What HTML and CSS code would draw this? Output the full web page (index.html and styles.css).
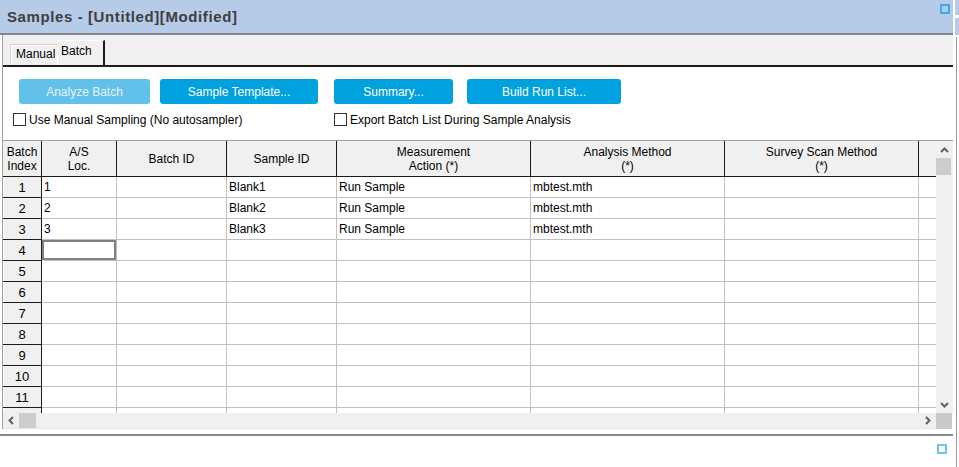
FILE: index.html
```html
<!DOCTYPE html>
<html>
<head>
<meta charset="utf-8">
<link rel="stylesheet" href="styles.css">
</head>
<body>
<div class="window">
  <div class="titlebar">
    <span class="title">Samples - [Untitled][Modified]</span>
    <span class="pin pin-top"></span>
  </div>
  <div class="body">
    <div class="tabstrip">
      <div class="tab tab-manual">Manual</div>
      <div class="tab tab-batch">Batch</div>
    </div>
    <div class="toolbar">
      <div class="btn-group first">
        <button class="btn btn-disabled w-analyze">Analyze Batch</button>
        <button class="btn w-template">Sample Template...</button>
      </div>
      <div class="btn-group second">
        <button class="btn w-summary">Summary...</button>
        <button class="btn w-build">Build Run List...</button>
      </div>
      <label class="check"><span class="box"></span>Use Manual Sampling (No autosampler)</label>
      <label class="check"><span class="box"></span>Export Batch List During Sample Analysis</label>
    </div>
    <div class="grid">
      <div class="sheet-wrap">
        <table class="sheet">
          <colgroup>
            <col class="c-idx"><col class="c-as"><col class="c-id"><col class="c-id"><col class="c-wide"><col class="c-wide"><col class="c-wide"><col class="c-part">
          </colgroup>
          <thead>
            <tr>
              <th class="hidx">Batch<br>Index</th>
              <th>A/S<br>Loc.</th>
              <th>Batch ID</th>
              <th>Sample ID</th>
              <th>Measurement<br>Action (*)</th>
              <th>Analysis Method<br>(*)</th>
              <th>Survey Scan Method<br>(*)</th>
              <th class="hpart"></th>
            </tr>
          </thead>
          <tbody>
            <tr><td class="idx">1</td><td>1</td><td></td><td>Blank1</td><td>Run Sample</td><td>mbtest.mth</td><td></td><td class="part"></td></tr>
            <tr><td class="idx">2</td><td>2</td><td></td><td>Blank2</td><td>Run Sample</td><td>mbtest.mth</td><td></td><td class="part"></td></tr>
            <tr><td class="idx">3</td><td>3</td><td></td><td>Blank3</td><td>Run Sample</td><td>mbtest.mth</td><td></td><td class="part"></td></tr>
            <tr><td class="idx">4</td><td class="focus"></td><td></td><td></td><td></td><td></td><td></td><td class="part"></td></tr>
            <tr><td class="idx">5</td><td></td><td></td><td></td><td></td><td></td><td></td><td class="part"></td></tr>
            <tr><td class="idx">6</td><td></td><td></td><td></td><td></td><td></td><td></td><td class="part"></td></tr>
            <tr><td class="idx">7</td><td></td><td></td><td></td><td></td><td></td><td></td><td class="part"></td></tr>
            <tr><td class="idx">8</td><td></td><td></td><td></td><td></td><td></td><td></td><td class="part"></td></tr>
            <tr><td class="idx">9</td><td></td><td></td><td></td><td></td><td></td><td></td><td class="part"></td></tr>
            <tr><td class="idx">10</td><td></td><td></td><td></td><td></td><td></td><td></td><td class="part"></td></tr>
            <tr><td class="idx">11</td><td></td><td></td><td></td><td></td><td></td><td></td><td class="part"></td></tr>
            <tr><td class="idx"></td><td></td><td></td><td></td><td></td><td></td><td></td><td class="part"></td></tr>
          </tbody>
        </table>
      </div>
      <div class="vscroll">
        <div class="arrow"><svg width="9" height="6" viewBox="0 0 9 6"><polyline points="1,5 4.5,1.5 8,5" fill="none" stroke="#606060" stroke-width="2"/></svg></div>
        <div class="vthumb"></div>
        <div class="vspace"></div>
        <div class="arrow"><svg width="9" height="6" viewBox="0 0 9 6"><polyline points="1,1 4.5,4.5 8,1" fill="none" stroke="#606060" stroke-width="2"/></svg></div>
      </div>
      <div class="hscroll">
        <div class="harrow"><svg width="6" height="9" viewBox="0 0 6 9"><polyline points="5,1 1.5,4.5 5,8" fill="none" stroke="#606060" stroke-width="2"/></svg></div>
        <div class="hthumb"></div>
        <div class="hspace"></div>
        <div class="harrow"><svg width="6" height="9" viewBox="0 0 6 9"><polyline points="1,1 4.5,4.5 1,8" fill="none" stroke="#606060" stroke-width="2"/></svg></div>
      </div>
      <div class="corner"></div>
    </div>
  </div>
  <div class="footer">
    <span class="pin pin-bottom"></span>
  </div>
</div>
<div class="edge">
  <div class="edge-top"></div>
  <div class="edge-line"></div>
</div>
</body>
</html>
```
FILE: styles.css
```css
* { box-sizing: border-box; }
html, body { margin: 0; padding: 0; }
body {
  width: 959px;
  height: 467px;
  overflow: hidden;
  display: flex;
  background: #fff;
  font-family: "Liberation Sans", Arial, sans-serif;
  font-size: 12px;
  color: #000;
}
.window {
  width: 953px;
  display: flex;
  flex-direction: column;
}
.titlebar {
  height: 35px;
  background: #b6cbe7;
  border-bottom: 2px solid #858585;
  display: flex;
  align-items: flex-start;
  padding-left: 7px;
}
.title {
  font-weight: bold;
  font-size: 15px;
  letter-spacing: 0.6px;
  color: #3e3e3e;
  margin-top: 8px;
}
.pin {
  width: 10px;
  height: 10px;
  display: block;
}
.pin-top {
  margin-left: auto;
  margin-right: 3px;
  margin-top: 4px;
  border: 2px solid #4aa6e0;
  background: #a4cdef;
}
.body {
  margin-left: 2px;
  border-left: 1px solid #a0a0a0;
  display: flex;
  flex-direction: column;
}
.tabstrip {
  height: 32px;
  background: #f0f0f0;
  border-bottom: 2px solid #1c1c1c;
  display: flex;
  align-items: flex-end;
  padding-left: 7px;
}
.tab {
  font-size: 12px;
  padding-left: 5px;
}
.tab-manual {
  width: 47px;
  height: 21px;
  line-height: 18px;
  border-top: 1px solid #d4d4d4;
  border-left: 1px solid #d4d4d4;
  box-shadow: inset 1px 1px 0 #fff;
  padding-left: 5px;
}
.tab-batch {
  width: 48px;
  height: 25px;
  line-height: 20px;
  border-top: 1px solid #fff;
  border-left: 1px solid #fff;
  border-right: 2px solid #1c1c1c;
  padding-left: 3px;
}
.toolbar {
  height: 73px;
  padding: 12px 0 0 10px;
  display: grid;
  grid-template-columns: 321px 1fr;
  grid-template-rows: 25px 13px;
  row-gap: 9px;
}
.btn-group {
  display: flex;
}
.btn-group.first { padding-left: 6px; gap: 10px; }
.btn-group.second { gap: 14px; }
.btn {
  height: 25px;
  border: 0;
  border-radius: 3px;
  background: #00a1df;
  color: #fff;
  font-family: "Liberation Sans", Arial, sans-serif;
  font-size: 12px;
  padding: 0;
}
.btn-disabled {
  background: #62c1ea;
  color: #e4f4fb;
}
.w-analyze { width: 131px; }
.w-template { width: 158px; }
.w-summary { width: 119px; }
.w-build { width: 154px; }
.check {
  display: flex;
  align-items: center;
  height: 13px;
  font-size: 12px;
  color: #000;
}
.box {
  width: 13px;
  height: 13px;
  border: 1px solid #333;
  background: #fff;
  margin-right: 3px;
}
.grid {
  border-top: 1px solid #a0a0a0;
  display: grid;
  grid-template-columns: 933px 17px;
  grid-template-rows: 272px 16px;
}
.sheet-wrap {
  overflow: hidden;
  background: #fff;
}
.sheet {
  table-layout: fixed;
  border-collapse: separate;
  border-spacing: 0;
  width: 933px;
}
.c-idx { width: 39px; }
.c-as { width: 75px; }
.c-id { width: 110px; }
.c-wide { width: 194px; }
.c-part { width: 17px; }
.sheet th {
  height: 36px;
  padding: 0;
  background: #f0f0f0;
  border-right: 1px solid #1c1c1c;
  border-bottom: 1px solid #1c1c1c;
  font-weight: normal;
  font-size: 12px;
  line-height: 14px;
  text-align: center;
  vertical-align: middle;
}
.sheet th.hpart { border-right: 0; }
.sheet td {
  height: 21px;
  padding: 0 0 0 2px;
  border-right: 1px solid #c0c0c0;
  border-bottom: 1px solid #c0c0c0;
  font-size: 12px;
  white-space: nowrap;
  overflow: hidden;
  vertical-align: middle;
}
.sheet td.idx {
  background: #f0f0f0;
  border-right: 1px solid #1c1c1c;
  border-bottom: 1px solid #1c1c1c;
  text-align: center;
  padding: 0;
  font-size: 13px;
  box-shadow: inset 1px 0 0 #fff;
}
.sheet td.part { border-right: 0; }
.sheet td.focus {
  box-shadow: inset 0 0 0 2px #808080;
}
.vscroll {
  background: #f0f0f0;
  display: flex;
  flex-direction: column;
}
.arrow {
  height: 17px;
  display: flex;
  align-items: center;
  justify-content: center;
  padding-right: 1px;
}
.vthumb {
  width: 15px;
  height: 17px;
  background: #cdcdcd;
}
.vspace { flex: 1; }
.hscroll {
  background: #f0f0f0;
  display: flex;
  align-items: center;
  border-bottom: 1px solid #e6e6e6;
}
.harrow {
  width: 16px;
  height: 15px;
  display: flex;
  align-items: center;
  justify-content: center;
}
.hthumb {
  width: 17px;
  height: 15px;
  background: #cdcdcd;
}
.hspace { flex: 1; }
.corner { background: #c9c9c9; width: 16px; }
.footer {
  margin-top: 5px;
  border-top: 2px solid #8a8a8a;
  flex: 1;
  display: flex;
  align-items: flex-start;
  padding-top: 8px;
}
.pin-bottom {
  margin-left: auto;
  margin-right: 6px;
  border: 2px solid #6cc6ef;
  background: #fff;
}
.edge {
  width: 6px;
  display: flex;
  flex-direction: column;
}
.edge-top {
  height: 35px;
  margin-left: 2px;
  background: linear-gradient(#b6cbe7 0 15px, #fff 15px 18px, #b6cbe7 18px);
}
.edge-line {
  flex: 1;
  margin-left: 3px;
  margin-top: 2px;
  border-left: 1px solid #9a9a9a;
}
```
